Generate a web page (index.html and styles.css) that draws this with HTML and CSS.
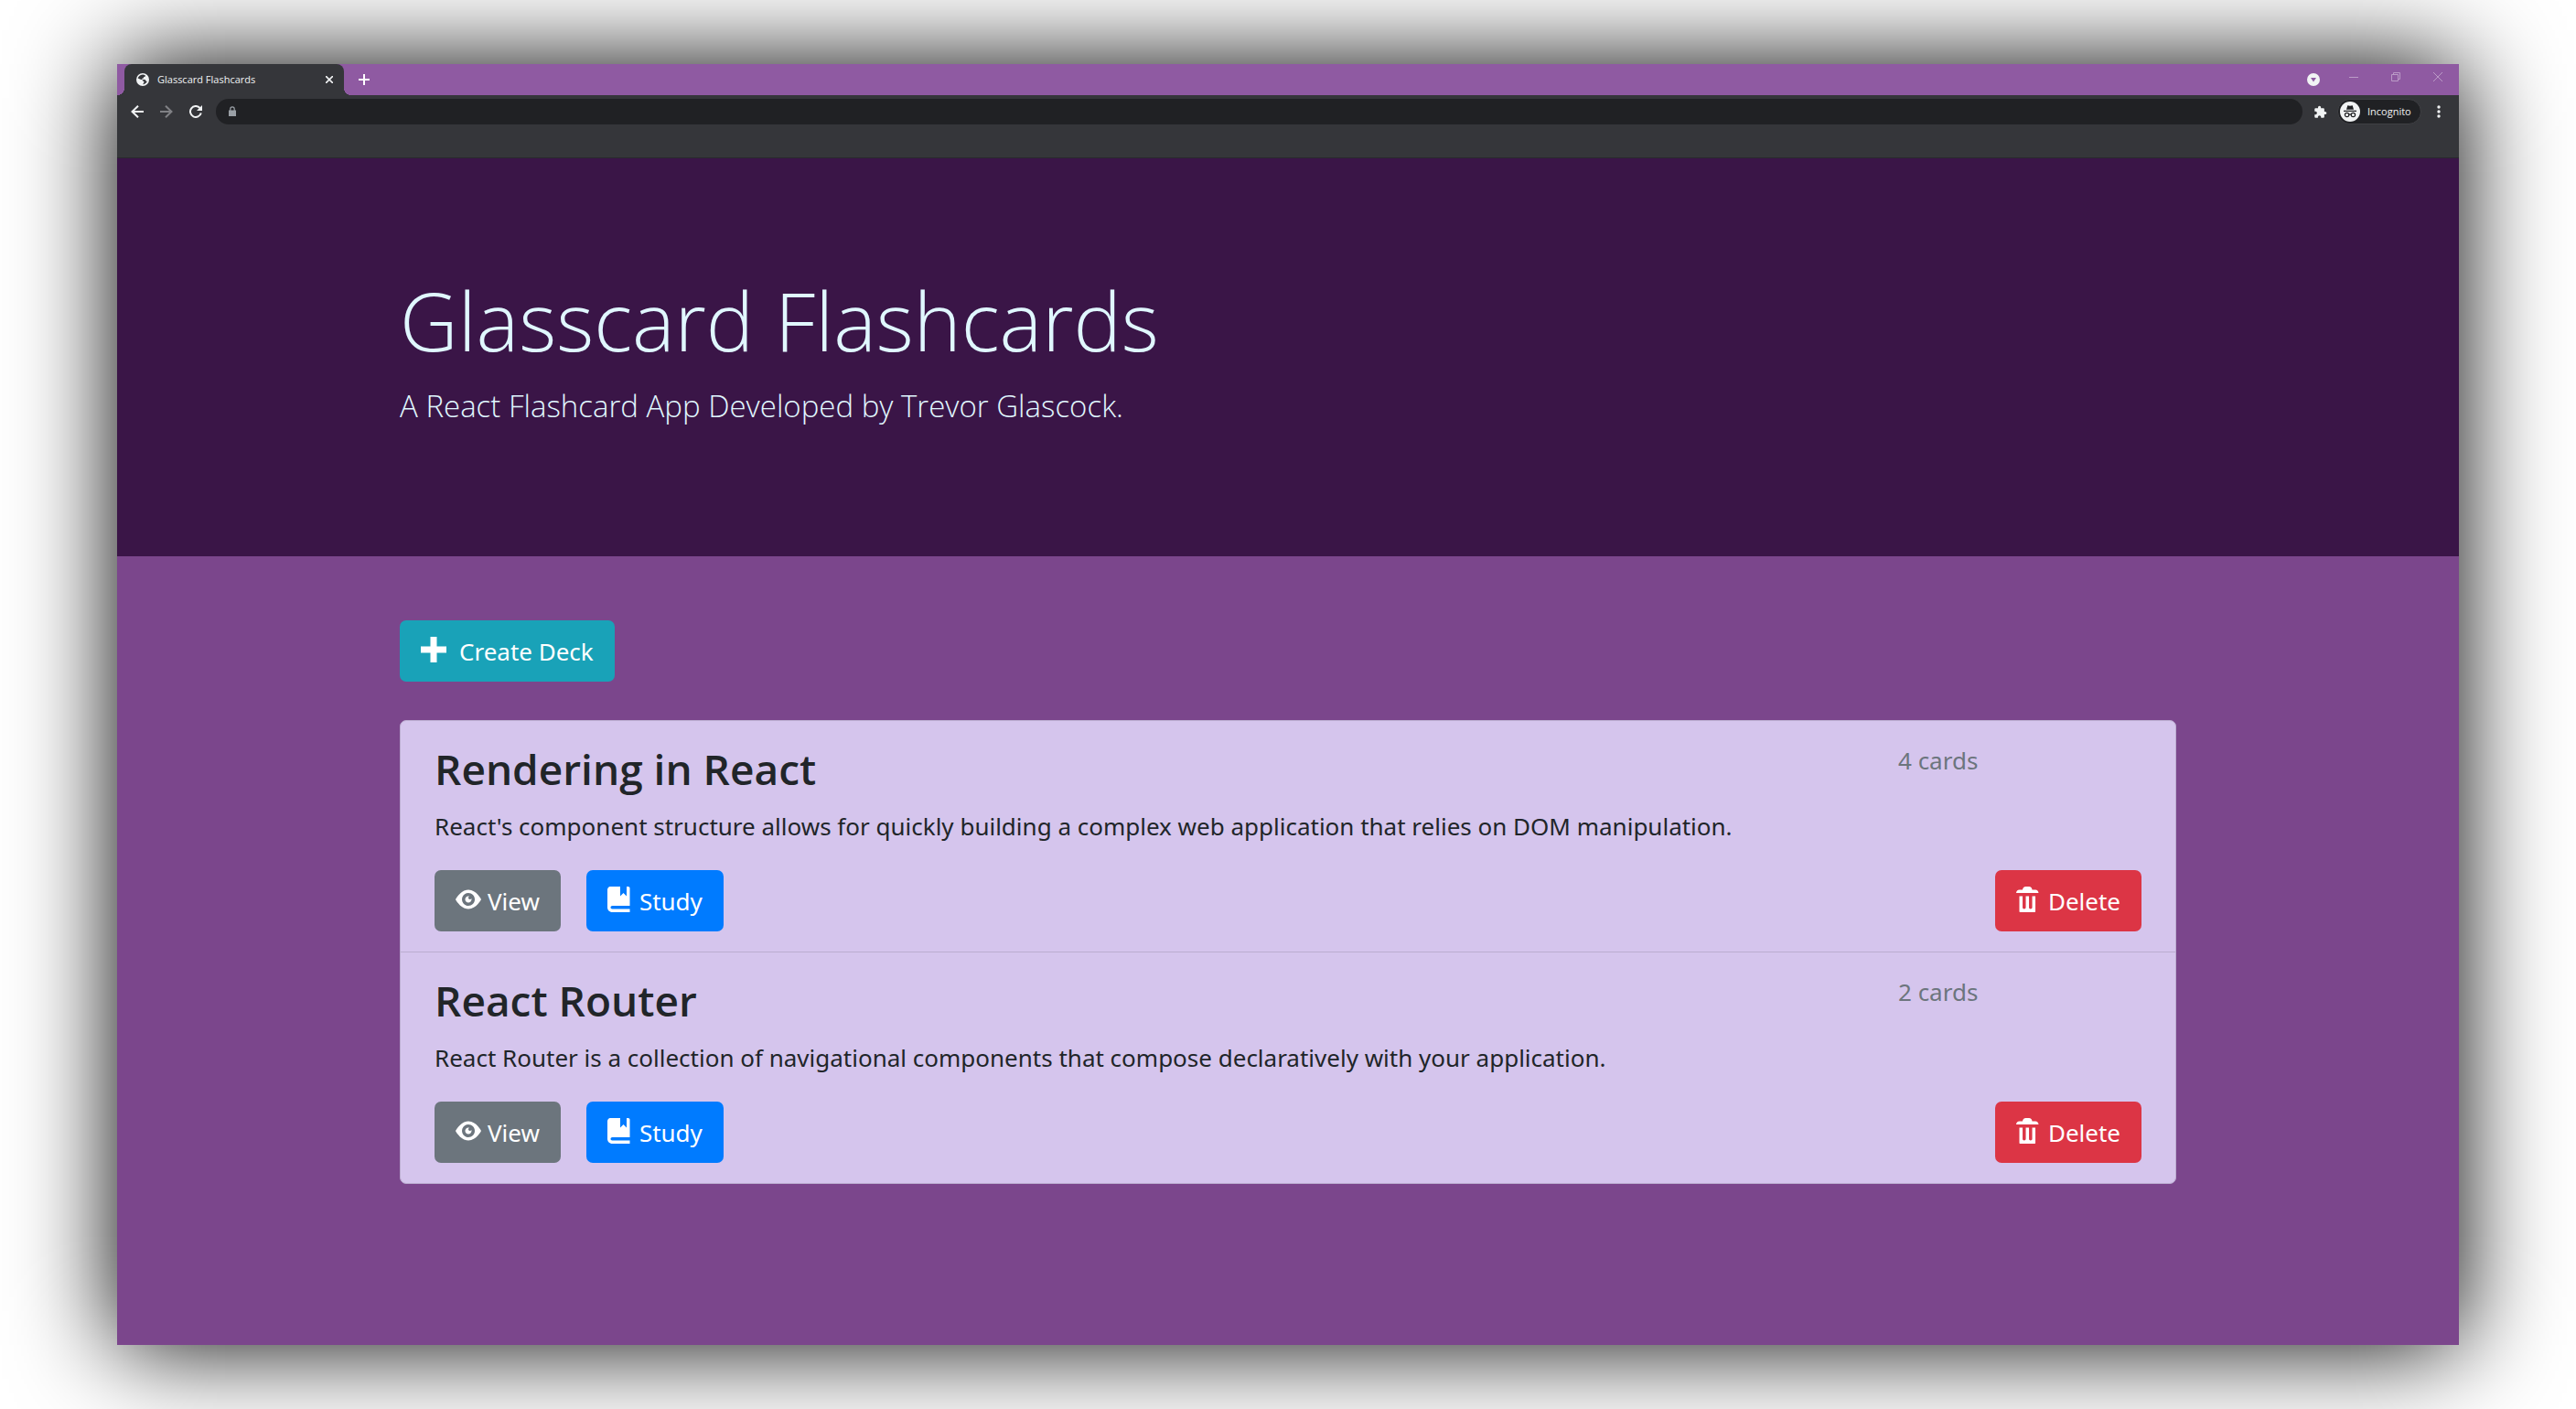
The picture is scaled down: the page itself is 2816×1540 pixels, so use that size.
FILE: index.html
```html
<!DOCTYPE html>
<html lang="en">
<head>
<meta charset="utf-8">
<meta name="viewport" content="width=device-width, initial-scale=1">
<title>Glasscard Flashcards</title>
<link rel="stylesheet" href="styles.css">
</head>
<body>
<svg class="sprite" aria-hidden="true">
  <symbol id="plus" viewBox="0 0 8 8"><path d="M3 0v3h-3v2h3v3h2v-3h3v-2h-3v-3h-2z"/></symbol>
  <symbol id="eye" viewBox="0 0 8 8"><path transform="translate(0 1)" d="M4.03 0c-2.53 0-4.03 3-4.03 3s1.5 3 4.03 3c2.47 0 3.97-3 3.97-3s-1.5-3-3.97-3zm-.03 1c1.11 0 2 .9 2 2 0 1.11-.89 2-2 2-1.1 0-2-.89-2-2 0-1.1.9-2 2-2zm0 1c-.55 0-1 .45-1 1s.45 1 1 1 1-.45 1-1c0-.1-.04-.19-.06-.28-.08.16-.24.28-.44.28-.28 0-.5-.22-.5-.5 0-.2.12-.36.28-.44-.09-.03-.18-.06-.28-.06z"/></symbol>
  <symbol id="book" viewBox="0 0 8 8"><path d="M1 0c-.07 0-.13.01-.19.03-.39.08-.7.39-.78.78-.03.06-.03.12-.03.19v5.500c0 .83.67 1.500 1.500 1.500h5.500v-1h-5.500c-.28 0-.5-.22-.5-.5s.22-.5.5-.5h5.500v-5.500c0-.28-.22-.5-.5-.5h-.5v3l-1-1-1 1v-3h-3z"/></symbol>
  <symbol id="trash" viewBox="0 0 8 8"><path d="M3 0c-.55 0-1 .45-1 1h-1c-.55 0-1 .45-1 1h7c0-.55-.45-1-1-1h-1c0-.55-.45-1-1-1h-1zm-2 3v4.810c0 .11.08.19.19.19h4.630c.11 0 .19-.08.19-.19v-4.810h-1v3.500c0 .28-.22.5-.5.5s-.5-.22-.5-.5v-3.500h-1v3.500c0 .28-.22.5-.5.5s-.5-.22-.5-.5v-3.500h-1z"/></symbol>
</svg>

<div class="window">
  <header class="chrome">
    <div class="tabstrip">
      <div class="tab">
        <svg class="favicon" viewBox="0 0 14 14" aria-hidden="true"><circle cx="7" cy="7" r="7" fill="#f1f3f4"/><path fill="#35363a" d="M7.600 1.600C5 1.600 2.600 3 1.700 5.400l3.500 1.500h1.600v1.700h1.500v1.800L7 12.300c2.200-.2 4-1.300 4.800-3.300l-1.300-.5-.8-1.600H6.500V5.400h1.600V3.900h1.300L10 2.500z"/></svg>
        <span class="tab-title">Glasscard Flashcards</span>
        <button class="icon-btn" type="button" aria-label="Close tab"><svg width="8" height="8" viewBox="0 0 8 8"><path d="M0 0l8 8M8 0L0 8" stroke="#f1f3f4" stroke-width="1.600"/></svg></button>
      </div>
      <button class="icon-btn new-tab" type="button" aria-label="New tab"><svg width="12" height="12" viewBox="0 0 12 12"><path d="M6 0v12M0 6h12" stroke="#fff" stroke-width="2"/></svg></button>
      <div class="window-controls">
        <button class="icon-btn tab-search" type="button" aria-label="Search tabs"><svg width="14" height="14" viewBox="0 0 14 14"><circle cx="7" cy="7" r="7" fill="#f1f3f4"/><path d="M4 5h6L7 9.500z" fill="#8f5aa2"/></svg></button>
        <button class="icon-btn caption" type="button" aria-label="Minimize"><svg width="10" height="10" viewBox="0 0 10 10"><path d="M0 5.500h10"/></svg></button>
        <button class="icon-btn caption" type="button" aria-label="Restore"><svg width="10" height="10" viewBox="0 0 10 10"><path d="M.5 2.500h7v7h-7zM2.500 2.500v-2h7v7h-2"/></svg></button>
        <button class="icon-btn caption" type="button" aria-label="Close"><svg width="10" height="10" viewBox="0 0 10 10"><path d="M0 0l10 10M10 0L0 10"/></svg></button>
      </div>
    </div>
    <div class="toolbar">
      <button class="icon-btn nav" type="button" aria-label="Back"><svg width="14" height="14" viewBox="0 0 14 14"><path d="M14 7H1.500M8 .7L1.500 7 8 13.300"/></svg></button>
      <button class="icon-btn nav nav-off" type="button" aria-label="Forward"><svg width="14" height="14" viewBox="0 0 14 14"><path d="M0 7h12.500M6 .7L12.500 7 6 13.300"/></svg></button>
      <button class="icon-btn nav" type="button" aria-label="Reload"><svg width="14" height="14" viewBox="0 0 14 14"><path d="M12.800 8.500A6 6 0 1 1 11.500 3"/><path class="solid" d="M14 0v6H8z"/></svg></button>
      <label class="address">
        <svg width="8" height="12" viewBox="0 0 8 12" aria-hidden="true"><path d="M0 4.500h8V11H0z" fill="#9aa0a6"/><path d="M1.800 5V3a2.200 2.200 0 0 1 4.400 0v2" fill="none" stroke="#9aa0a6" stroke-width="1.200"/></svg>
        <input class="address-input" type="text" aria-label="Address">
      </label>
      <button class="icon-btn ext" type="button" aria-label="Extensions"><svg width="15" height="15" viewBox="0 0 24 24"><path fill="#f1f3f4" d="M20.500 11H19V7c0-1.100-.9-2-2-2h-4V3.500a2.500 2.500 0 0 0-5 0V5H4c-1.100 0-2 .9-2 2v3.800h1.500a2.700 2.700 0 0 1 0 5.400H2V20c0 1.100.9 2 2 2h3.800v-1.500a2.700 2.700 0 0 1 5.400 0V22H17c1.100 0 2-.9 2-2v-4h1.500a2.500 2.500 0 0 0 0-5z"/></svg></button>
      <button class="profile" type="button">
        <svg width="22" height="22" viewBox="0 0 22 22" aria-hidden="true"><circle cx="11" cy="11" r="11" fill="#f1f3f4"/><path fill="#202124" d="M8.300 4.300l2.700.5 2.700-.5 1.300 4.400H7zM4 9.800h14v1.200H4z"/><g fill="none" stroke="#202124" stroke-width="1.200"><circle cx="7.600" cy="14.500" r="2.200"/><circle cx="14.400" cy="14.500" r="2.200"/><path d="M9.800 14.200q1.200-.8 2.400 0"/></g></svg>
        <span>Incognito</span>
      </button>
      <button class="icon-btn menu" type="button" aria-label="Menu"><svg width="4" height="14" viewBox="0 0 4 14"><g fill="#f1f3f4"><circle cx="2" cy="2" r="1.700"/><circle cx="2" cy="7" r="1.700"/><circle cx="2" cy="12" r="1.700"/></g></svg></button>
    </div>
  </header>

  <section class="hero">
    <div class="container">
      <h1 class="hero-title">Glasscard Flashcards</h1>
      <p class="hero-lead">A React Flashcard App Developed by Trevor Glascock.</p>
    </div>
  </section>

  <main class="container content">
    <a class="btn btn-info" href="#new"><svg class="oi"><use href="#plus"/></svg>Create Deck</a>
    <ul class="decks">
      <li class="deck">
        <div class="deck-head">
          <h2 class="deck-title">Rendering in React</h2>
          <span class="deck-count">4 cards</span>
        </div>
        <p class="deck-text">React's component structure allows for quickly building a complex web application that relies on DOM manipulation.</p>
        <div class="deck-actions">
          <a class="btn btn-secondary" href="#view-1"><svg class="oi"><use href="#eye"/></svg>View</a>
          <a class="btn btn-primary" href="#study-1"><svg class="oi"><use href="#book"/></svg>Study</a>
          <button class="btn btn-danger" type="button"><svg class="oi"><use href="#trash"/></svg>Delete</button>
        </div>
      </li>
      <li class="deck">
        <div class="deck-head">
          <h2 class="deck-title">React Router</h2>
          <span class="deck-count">2 cards</span>
        </div>
        <p class="deck-text">React Router is a collection of navigational components that compose declaratively with your application.</p>
        <div class="deck-actions">
          <a class="btn btn-secondary" href="#view-2"><svg class="oi"><use href="#eye"/></svg>View</a>
          <a class="btn btn-primary" href="#study-2"><svg class="oi"><use href="#book"/></svg>Study</a>
          <button class="btn btn-danger" type="button"><svg class="oi"><use href="#trash"/></svg>Delete</button>
        </div>
      </li>
    </ul>
  </main>
</div>
</body>
</html>
```
FILE: styles.css
```css
* {
  box-sizing: border-box;
}

body {
  margin: 0;
  padding: 70px 128px;
  background: #fff;
  color: #212529;
  font-family: "Noto Sans", "Open Sans", sans-serif;
  font-size: 26px;
  line-height: 42px;
}

h1,
h2,
p,
ul {
  margin: 0;
  padding: 0;
}

.sprite {
  display: none;
}

.window {
  min-height: calc(100vh - 140px);
  background: #7b468c;
  box-shadow: 0 0 104px #000;
}

/* Browser chrome */
.chrome {
  background: #35363a;
  border-bottom: 1px solid #292a2d;
  color: #f1f3f4;
  font-family: "Open Sans", "Noto Sans", sans-serif;
  font-size: 11px;
  font-weight: 500;
  line-height: 16px;
}

.tabstrip {
  display: flex;
  align-items: center;
  height: 34px;
  padding-left: 8px;
  background: #8f5aa2;
}

.tab {
  position: relative;
  display: flex;
  align-items: center;
  gap: 9px;
  width: 240px;
  height: 34px;
  padding: 0 12px 0 13px;
  border-radius: 8px 8px 0 0;
  background: #35363a;
}

.tab::before,
.tab::after {
  content: "";
  position: absolute;
  bottom: 0;
  width: 8px;
  height: 8px;
}

.tab::before {
  right: 100%;
  background: radial-gradient(circle at 0 0, transparent 8px, #35363a 8px);
}

.tab::after {
  left: 100%;
  background: radial-gradient(circle at 100% 0, transparent 8px, #35363a 8px);
}

.favicon {
  width: 14px;
  height: 14px;
}

.tab-title {
  flex: 1;
  white-space: nowrap;
}

.icon-btn {
  display: flex;
  align-items: center;
  justify-content: center;
  padding: 0;
  border: 0;
  background: none;
}

.new-tab {
  width: 28px;
  height: 28px;
  margin-left: 8px;
}

.window-controls {
  display: flex;
  align-items: center;
  margin-left: auto;
}

.caption {
  width: 46px;
  height: 28px;
  padding-bottom: 6px;
}

.tab-search {
  margin-right: 14px;
}

.caption svg {
  fill: none;
  stroke: #bb9bc7;
}

.toolbar {
  display: flex;
  align-items: center;
  height: 68px;
  padding: 4px 15px 36px 15px;
}

.nav {
  width: 14px;
  height: 28px;
  margin-right: 18px;
}

.nav svg {
  fill: none;
  stroke: #f1f3f4;
  stroke-width: 2;
}

.nav .solid {
  fill: #f1f3f4;
  stroke: none;
}

.nav-off svg {
  stroke: #808185;
}

.address {
  display: flex;
  flex: 1;
  align-items: center;
  gap: 8px;
  height: 28px;
  margin-left: -3px;
  padding: 0 14px;
  border-radius: 14px;
  background: #202124;
}

.address-input {
  flex: 1;
  min-width: 0;
  padding: 0;
  border: 0;
  outline: 0;
  background: none;
  color: inherit;
  font: inherit;
}

.ext {
  margin: 0 11px 0 12px;
}

.profile {
  display: flex;
  align-items: center;
  gap: 8px;
  width: 92px;
  height: 28px;
  padding: 0 0 0 2px;
  border: 1px solid #3f4044;
  border-radius: 14px;
  background: #202124;
  color: #f1f3f4;
  font: inherit;
}

.menu {
  width: 14px;
  margin-left: 12px;
}

/* Page */
.container {
  width: 76%;
  max-width: 1942px;
  margin: 0 auto;
}

.hero {
  padding: 119px 0 139px;
  background: #3a1547;
  color: #e0f7ff;
  font-family: "Open Sans", "Noto Sans", sans-serif;
  font-weight: 300;
}

.hero-title {
  font-size: 88px;
  font-weight: 300;
  line-height: 116px;
}

.hero-lead {
  margin-top: 10px;
  font-size: 33px;
  line-height: 51px;
}

.content {
  padding: 70px 0;
}

.btn {
  display: inline-flex;
  align-items: center;
  gap: 7px;
  height: 67px;
  padding: 0 23px;
  border: 0;
  border-radius: 7px;
  color: #fff;
  font: inherit;
  text-decoration: none;
  white-space: nowrap;
}

.oi {
  width: 28px;
  height: 28px;
  margin-bottom: 3px;
  fill: currentColor;
}

.btn-info {
  gap: 14px;
  background: #19a2b8;
}

.btn-secondary {
  background: #6c757d;
}

.btn-primary {
  background: #007bff;
}

.btn-danger {
  margin-left: auto;
  background: #dc3545;
}

.decks {
  margin-top: 42px;
  border: 1px solid #bbadd0;
  border-radius: 7px;
  background: #d5c5ed;
  list-style: none;
}

.deck {
  padding: 22px 37px;
}

.deck + .deck {
  border-top: 1px solid #bbadd0;
}

.deck-head {
  display: grid;
  grid-template-columns: 1fr 266px;
  align-items: start;
}

.deck-title {
  font-family: "Open Sans", "Noto Sans", sans-serif;
  font-size: 46px;
  font-weight: 600;
  line-height: 60px;
}

.deck-count {
  color: #6c757d;
}

.deck-text {
  margin: 12px 0 27px;
}

.deck-actions {
  display: flex;
  gap: 28px;
}
```
